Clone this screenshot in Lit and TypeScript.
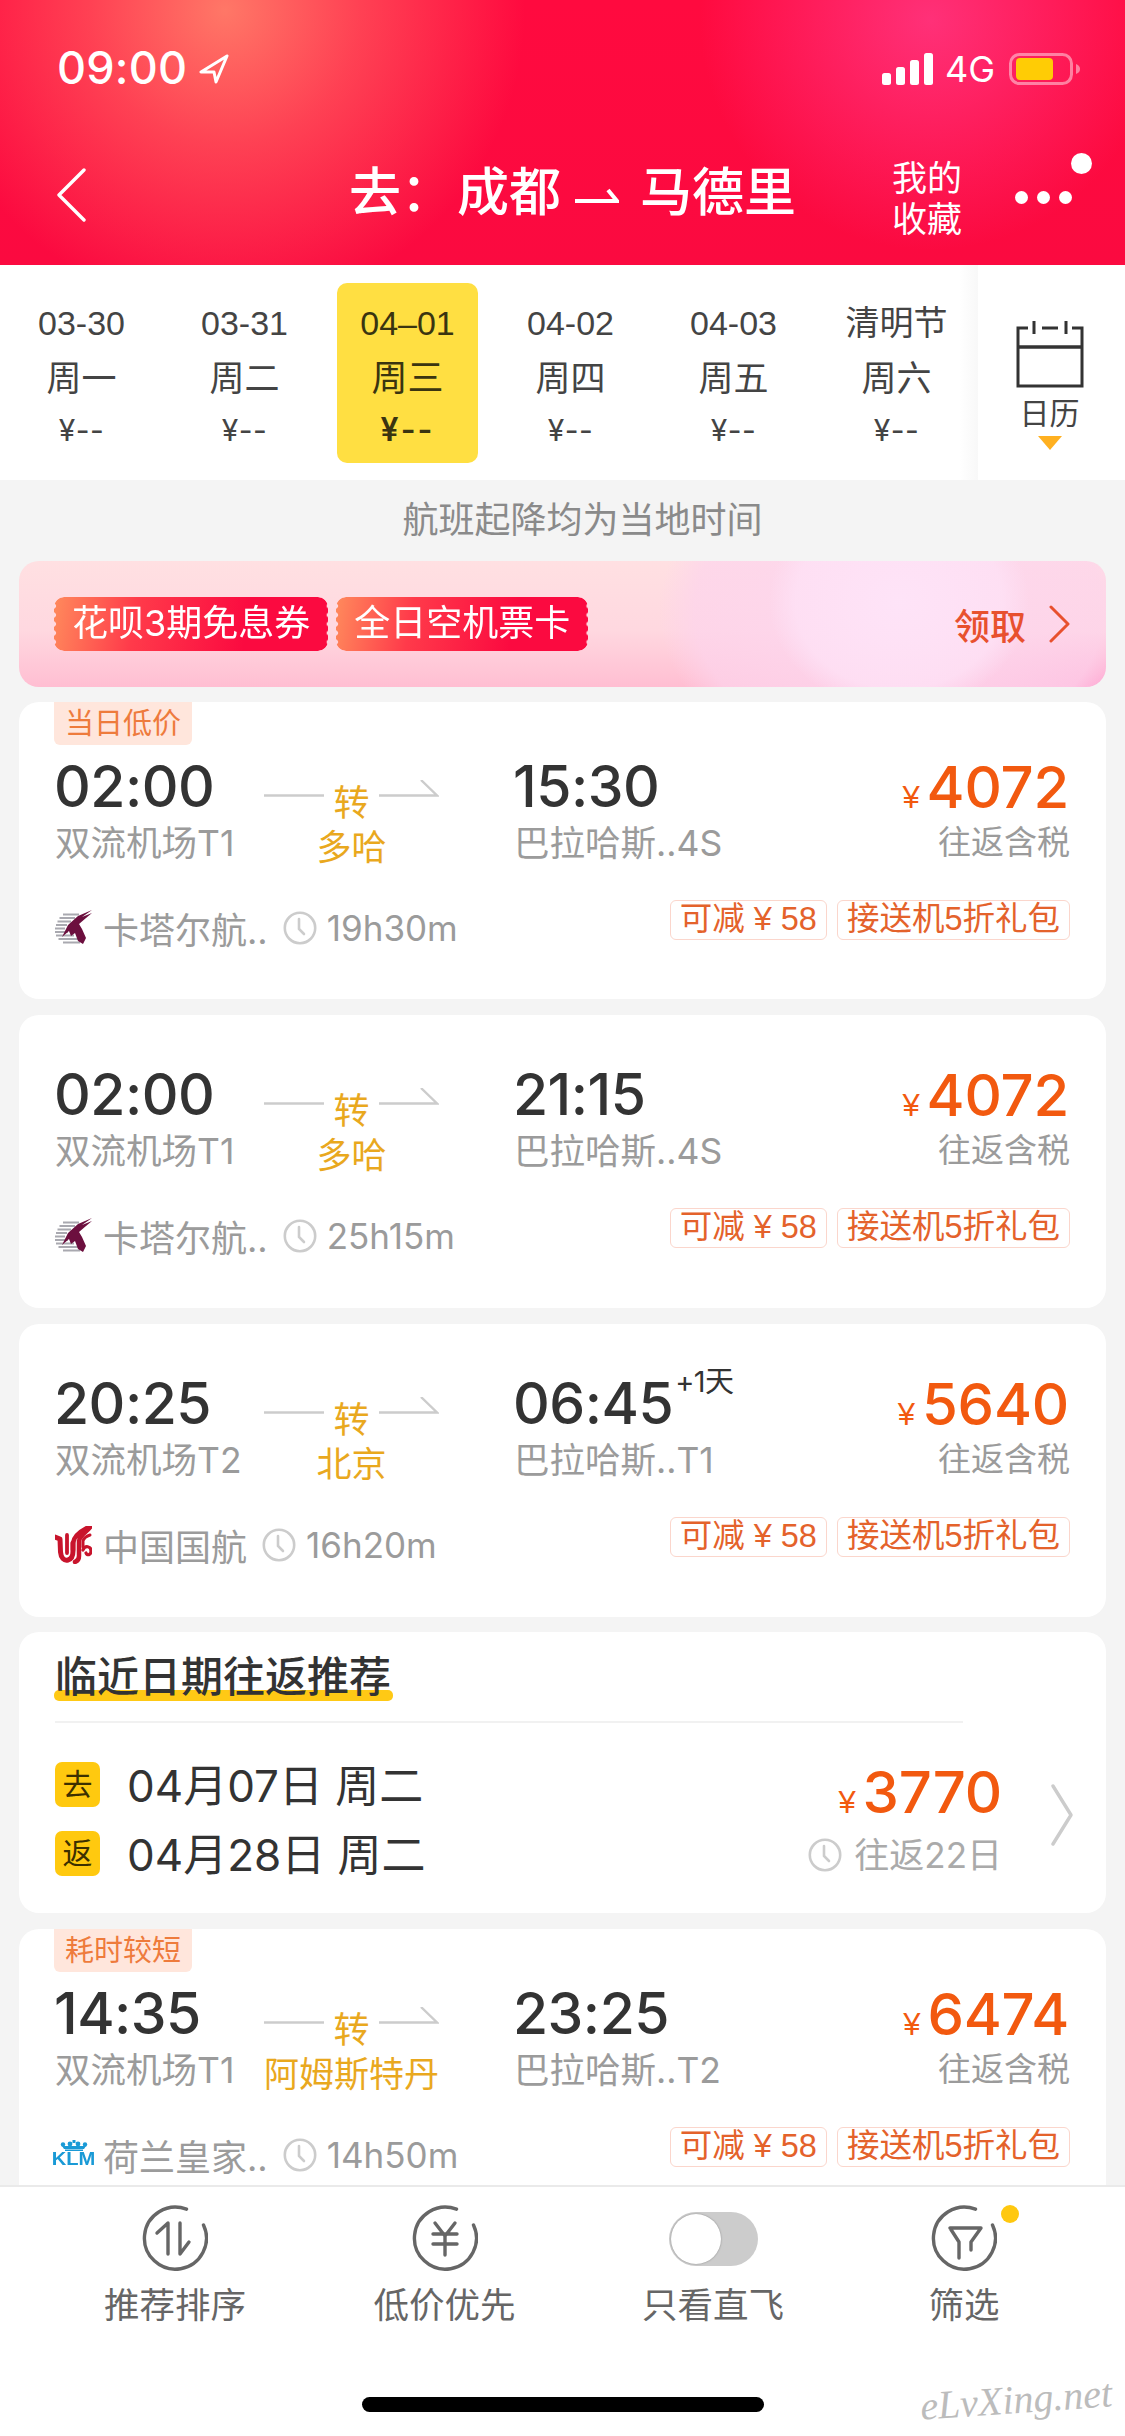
import { LitElement, html, css, svg } from "lit";
import { customElement } from "lit/decorators.js";

type Flight = {
  tag?: string; dep: string; depAp: string; via: string; arr: string; arrAp: string; plus?: string;
  price: string; logo: "qr" | "ca" | "kl"; airline: string; dur: string;
};

const FLIGHTS: Flight[] = [
  { tag: "当日低价", dep: "02:00", depAp: "双流机场T1", via: "多哈", arr: "15:30", arrAp: "巴拉哈斯..4S", price: "4072", logo: "qr", airline: "卡塔尔航..", dur: "19h30m" },
  { dep: "02:00", depAp: "双流机场T1", via: "多哈", arr: "21:15", arrAp: "巴拉哈斯..4S", price: "4072", logo: "qr", airline: "卡塔尔航..", dur: "25h15m" },
  { dep: "20:25", depAp: "双流机场T2", via: "北京", arr: "06:45", plus: "+1天", arrAp: "巴拉哈斯..T1", price: "5640", logo: "ca", airline: "中国国航", dur: "16h20m" },
  { tag: "耗时较短", dep: "14:35", depAp: "双流机场T1", via: "阿姆斯特丹", arr: "23:25", arrAp: "巴拉哈斯..T2", price: "6474", logo: "kl", airline: "荷兰皇家..", dur: "14h50m" },
];

const DATES = [
  { d: "03-30", w: "周一", p: "¥--" },
  { d: "03-31", w: "周二", p: "¥--" },
  { d: "04–01", w: "周三", p: "¥--", on: true },
  { d: "04-02", w: "周四", p: "¥--" },
  { d: "04-03", w: "周五", p: "¥--" },
  { d: "清明节", w: "周六", p: "¥--" },
];

const clock = (size: number) => html`<svg class="clock" width=${size} height=${size} viewBox="0 0 34 34" fill="none" stroke="#ccc" stroke-width="2.6" stroke-linecap="round"><circle cx="17" cy="17" r="15.2"/><path d="M16 8V18L21 23"/></svg>`;

const ring = svg`<path d="M61.5 20A31 31 0 1 1 44.5 4.2" fill="none" stroke="#666" stroke-width="3.4" stroke-linecap="round"/>`;

const LOGOS = {
  qr: html`<svg class="logo" width="37" height="36" viewBox="0 0 37 36">
    <g stroke="#a9a9b0" stroke-width="1.900">
      <path d="M8 4.500H24M4.500 8H20M2.500 11.500H16M1 15H12M0 18.500H10M0 22H13M1 25.500H19M3.500 29H24M8 32.500H25"/>
    </g>
    <path d="M37 0 23 6 13 15 7 27 14 21 16 26 20 23 23 31 28 34 31 28 27 19 24 14 31 8 37 3 27 7Z" fill="#6c0f3e"/>
  </svg>`,
  ca: html`<svg class="logo" width="37" height="38" viewBox="0 0 37 38" fill="none" stroke="#c8142c" stroke-linecap="round" stroke-linejoin="round">
    <path d="M0 11 5 13 5.500 26C6 32 9 35 13 34 17 33 18 30 18 25V17" stroke-width="5"/>
    <path d="M18 24V17C19 9 27 4 36 0 31 7 25 9 24 15V30C24 33 23 35 20 36" stroke-width="4.500"/>
    <path d="M28 21V15C29 11 32 10 35 9" stroke-width="3"/>
    <path d="M28 24C30 19 36 20 36 25 36 29 32 30 31 27" stroke-width="3.200"/>
    <path d="M12 9V27" stroke-width="3.800"/>
  </svg>`,
  kl: html`<div class="logo klm"><svg width="30" height="11" viewBox="0 0 30 11" fill="#1a9ad6"><rect x="13.500" y="0" width="3" height="3"/><circle cx="4" cy="4.500" r="2.200"/><circle cx="11" cy="4" r="2.400"/><circle cx="19" cy="4" r="2.400"/><circle cx="26" cy="4.500" r="2.200"/><path d="M3 6H27L25 9H5Z"/><rect x="6" y="9.500" width="18" height="1.500"/></svg><span>KLM</span></div>`,
};

@customElement("app-root")
export class AppRoot extends LitElement {
  static styles = css`
    :host { display: block; width: 1125px; font-family: "Inter", "Noto Sans CJK SC", "Liberation Sans", sans-serif; color: #333; }
    * { box-sizing: border-box; }
    .page { width: 1125px; height: 2436px; display: flex; flex-direction: column; background: #f4f4f4; overflow: hidden; }

    .header { flex: 0 0 265px; color: #fff; position: relative;
      background:
        radial-gradient(circle 300px at 225px 10px, rgba(255,125,105,.95), rgba(255,110,100,.55) 45%, rgba(255,60,80,0) 100%),
        radial-gradient(circle 230px at 930px 20px, rgba(255,55,130,.85), rgba(255,40,110,0) 100%),
        linear-gradient(180deg, #ff0a3f 0%, #fb0a40 100%); }
    .status { height: 119px; padding: 46px 0 0 57px; display: flex; align-items: flex-start; }
    .status-time { font-size: 45px; line-height: 44px; font-weight: 500; letter-spacing: .2px; }
    .loc { margin: 8px 0 0 12px; }
    .status-right { margin-left: auto; display: flex; align-items: flex-start; padding: 7px 0 0 0; margin-right: 44px; }
    .net { font-size: 36px; line-height: 36px; margin: -2px 14px 0 12px; color: #fff; }
    .nav { height: 146px; display: grid; grid-template-columns: 293px 542px 68px 1fr; padding-left: 57px; align-items: center; }
    .back { margin-top: 6px; }
    .title { display: flex; align-items: center; font-size: 52px; font-weight: 500; line-height: 60px; margin-top: 2px; white-space: nowrap; margin-left: -1px; }
    .title .colon { margin-right: 4px; }
    .title svg { margin: 6px 21px 0 14px; }
    .fav { font-size: 35px; line-height: 41px; text-align: center; margin-top: 14px; white-space: nowrap; }
    .more { display: flex; gap: 9px; margin: 10px 0 0 55px; }
    .more i { width: 13px; height: 13px; border-radius: 50%; background: #fff; display: block; }
    .pip { position: absolute; left: 1071px; top: 153px; width: 21px; height: 21px; border-radius: 50%; background: #fff; }

    .dates { flex: 0 0 215px; background: #fff; display: flex; }
    .date-list { display: grid; grid-template-columns: repeat(6, 163px); padding-top: 18px; background: linear-gradient(90deg, #fff calc(100% - 18px), #f8f8f8 100%); }
    .date { height: 180px; text-align: center; padding-top: 15px; color: #444; white-space: nowrap; border-radius: 10px; margin-inline: 11px; }
    .date .d { line-height: 50px; font-size: 34px; font-family: "Liberation Sans", "Noto Sans CJK SC", sans-serif; }
    .date .w { line-height: 60px; font-size: 35px; }
    .date .p { line-height: 44px; font-size: 30px; letter-spacing: .5px; }
    .date.on { background: #ffdf42; color: #3a3410; }
    .date.on .d { font-size: 34px; }
    .date.on .w { font-size: 36px; }
    .date.on .p { font-size: 32px; font-weight: 600; letter-spacing: 2px; }
    .cal { flex: 1; display: flex; flex-direction: column; align-items: center; padding: 55px 4px 0 0; color: #444; }
    .cal span { font-size: 30px; line-height: 44px; margin-top: 3px; }
    .tri { width: 0; height: 0; border-left: 12px solid transparent; border-right: 12px solid transparent; border-top: 14px solid #ffb020; margin-top: 1px; }

    .content { flex: 1; min-height: 0; overflow: hidden; padding: 0 19px; }
    .note { height: 81px; line-height: 81px; text-align: center; font-size: 36px; color: #8a8a8a; padding-left: 40px; white-space: nowrap; }
    .banner { height: 126px; border-radius: 20px; display: flex; align-items: center; padding: 0 36px 0 35px; margin-bottom: 15px;
      background:
        radial-gradient(ellipse 130px 110px at 880px 40px, rgba(254,228,248,.95), rgba(254,226,246,.75) 80%, rgba(254,220,240,0) 100%),
        radial-gradient(ellipse 240px 170px at 880px 50px, rgba(253,214,238,.9), rgba(253,212,236,.7) 85%, rgba(253,205,230,0) 100%),
        radial-gradient(ellipse 200px 60px at 1090px 130px, rgba(255,150,205,.8), rgba(255,170,215,0) 100%),
        linear-gradient(180deg, #ffe0e2 0%, #ffd8e0 55%, #ffbed2 100%); }
    .coupon { height: 54px; line-height: 52px; font-size: 36px; color: #fff; padding: 0 18px; white-space: nowrap; border-radius: 10px; margin-right: 8px;
      background: linear-gradient(100deg, #ff8a5c 0%, #ff3a4a 30%, #fb0a40 70%);
      -webkit-mask: radial-gradient(circle 2.500px at 0 50%, transparent 97%, #000) left / 51% 9px repeat-y, radial-gradient(circle 2.500px at 100% 50%, transparent 97%, #000) right / 51% 9px repeat-y;
      mask: radial-gradient(circle 2.500px at 0 50%, transparent 97%, #000) left / 51% 9px repeat-y, radial-gradient(circle 2.500px at 100% 50%, transparent 97%, #000) right / 51% 9px repeat-y; }
    .get { margin-left: auto; display: flex; align-items: center; gap: 22px; font-size: 36px; font-weight: 500; color: #e8502e; }

    .card { background: #fff; border-radius: 20px; margin-bottom: 16px; position: relative; padding: 50px 36px 52px; }
    .card.tagged { padding-top: 55px; padding-bottom: 51px; }
    .tag { position: absolute; left: 35px; top: 0; width: 138px; height: 43px; line-height: 43px; text-align: center; background: #ffe6dc; color: #ee7b3c; font-size: 29px; border-radius: 0 0 6px 6px; white-space: nowrap; }
    .main { display: grid; grid-template-columns: 209px 250px 1fr auto; grid-template-rows: 60px 52px; }
    .time { font-size: 57px; line-height: 60px; font-weight: 500; color: #333; white-space: nowrap; display: flex; align-items: flex-start; letter-spacing: -.5px; margin-left: -1px; }
    .time sup { font-size: 29px; line-height: 28px; font-weight: 400; margin: -6px 0 0 2px; }
    .ap { font-size: 35.500px; line-height: 52px; color: #9b9b9b; white-space: nowrap; margin-top: 1px; }
    .mid { grid-column: 2; grid-row: 1 / 3; width: 175px; display: flex; flex-direction: column; align-items: center; padding-top: 28px; }
    .mid-top { display: flex; align-items: flex-start; width: 175px; justify-content: space-between; height: 36px; }
    .mid-top b { font-weight: 400; font-size: 36px; line-height: 36px; color: #e9a81e; }
    .mid-top svg { margin-top: -5px; }
    .via { font-size: 35px; line-height: 52px; color: #e9a81e; white-space: nowrap; }
    .dep { grid-column: 1; grid-row: 1; } .dep-ap { grid-column: 1; grid-row: 2; }
    .arr { grid-column: 3; grid-row: 1; } .arr-ap { grid-column: 3; grid-row: 2; }
    .price { grid-column: 4; grid-row: 1; justify-self: end; margin-right: 1px; }
    .incl { grid-column: 4; grid-row: 2; justify-self: end; font-size: 33px; line-height: 50px; color: #9b9b9b; white-space: nowrap; }
    .pr { display: flex; align-items: baseline; gap: 7px; color: #f2590f; line-height: 60px; font-size: 58px; font-weight: 500; white-space: nowrap; letter-spacing: -.2px; }
    .pr i { font-style: normal; font-size: 31px; font-family: "Liberation Sans", sans-serif; font-weight: 400; }
    .foot { display: flex; margin-top: 31px; height: 48px; align-items: flex-start; }
    .air { display: flex; align-items: center; align-self: flex-end; height: 40px; font-size: 36px; color: #9b9b9b; white-space: nowrap; }
    .logo { margin-right: 11px; flex: none; }
    .klm { width: 37px; display: flex; flex-direction: column; align-items: center; margin-top: -4px; }
    .klm span { font: 700 19px/14px "Liberation Sans", sans-serif; color: #1a9ad6; transform: scaleX(1.06); margin-top: 1px; }
    .air .clock { margin: 0 10px 0 15px; }
    .dur { font-size: 35px; }
    .promos { margin-left: auto; display: flex; gap: 10px; }
    .promo { height: 40px; line-height: 36px; border: 1.500px solid #fbd6cc; border-radius: 6px; padding: 0 9px; font-size: 32.500px; font-family: "Liberation Sans", "Noto Sans CJK SC", sans-serif; color: #e4622b; white-space: nowrap; }

    .rec { background: #fff; border-radius: 20px; margin-bottom: 16px; padding: 20px 33px 25px 36px; margin-top: -1px; }
    .rec h2 { margin: 0; font-size: 42px; line-height: 50px; font-weight: 500; display: inline-block; position: relative; z-index: 0; color: #333; white-space: nowrap; }
    .rec h2::after { content: ""; position: absolute; z-index: -1; left: -1px; right: -2px; bottom: 1px; height: 11px; background: #ffc915; border-radius: 5px; }
    .rule { width: 908px; height: 2px; background: #f1f1f1; margin-top: 19px; }
    .rec-body { display: flex; padding-top: 27px; align-items: flex-start; }
    .legs { display: grid; }
    .leg { display: flex; align-items: center; height: 69px; gap: 27px; font-size: 44px; color: #333; white-space: nowrap; }
    .leg b { width: 45px; height: 45px; line-height: 44px; text-align: center; background: #ffc90f; color: #3c3000; border-radius: 7px; font-size: 30px; font-weight: 400; }
    .leg span { margin-bottom: 4px; }
    .rec-right { margin-left: auto; display: flex; flex-direction: column; align-items: flex-end; padding-top: 12px; }
    .rec-meta { display: flex; align-items: center; gap: 12px; font-size: 35px; line-height: 44px; color: #aaa; white-space: nowrap; }
    .rec-chev { margin: 34px 0 0 49px; }

    .tabs { flex: 0 0 251px; background: #fff; border-top: 2px solid #eaeaea; position: relative; }
    .tab-row { display: grid; grid-template-columns: 270px 269px 268px 234px; padding: 18px 0 0 40px; }
    .tab { display: flex; flex-direction: column; align-items: center; color: #666; font-size: 35.500px; position: relative; }
    .tab span { line-height: 50px; margin-top: 10px; white-space: nowrap; }
    .slot { height: 66px; display: flex; align-items: flex-end; }
    .toggle { width: 89px; height: 54px; border-radius: 27px; background: #ccc; padding: 2px; display: flex; margin-bottom: 5px; }
    .toggle i { width: 50px; height: 50px; border-radius: 50%; background: #fff; display: block; box-shadow: 0 0 2px rgba(0,0,0,.35); }
    .dot { position: absolute; left: 154px; top: 0; width: 18px; height: 18px; border-radius: 50%; background: #ffc80f; }
    .home { width: 402px; height: 15px; border-radius: 8px; background: #000; margin: 66px 0 0 362px; }
    .mark { position: absolute; left: 920px; top: 190px; font: italic 400 40px/46px "Liberation Serif", serif; color: #bcbcbc; white-space: nowrap; transform: rotate(-4deg); }
  `;

  private card(f: Flight) {
    return html`<div class="card ${f.tag ? "tagged" : ""}">
      ${f.tag ? html`<div class="tag">${f.tag}</div>` : ""}
      <div class="main">
        <div class="time dep">${f.dep}</div>
        <div class="ap dep-ap">${f.depAp}</div>
        <div class="mid">
          <div class="mid-top">
            <svg width="60" height="20" viewBox="0 0 60 20"><path d="M0 15.500H60" stroke="#ccc" stroke-width="2.400"/></svg>
            <b>转</b>
            <svg width="60" height="20" viewBox="0 0 60 20" fill="none"><path d="M0 15.500H58L42 0" stroke="#ccc" stroke-width="2.400"/></svg>
          </div>
          <div class="via">${f.via}</div>
        </div>
        <div class="time arr">${f.arr}${f.plus ? html`<sup>${f.plus}</sup>` : ""}</div>
        <div class="ap arr-ap">${f.arrAp}</div>
        <div class="pr price"><i>¥</i>${f.price}</div>
        <div class="incl">往返含税</div>
      </div>
      <div class="foot">
        <div class="air">${LOGOS[f.logo]}${f.airline}${clock(34)}<span class="dur">${f.dur}</span></div>
        <div class="promos"><div class="promo">可减 ¥ 58</div><div class="promo">接送机5折礼包</div></div>
      </div>
    </div>`;
  }

  render() {
    return html`<div class="page">
      <header class="header">
        <div class="status">
          <div class="status-time">09:00</div>
          <svg class="loc" width="30" height="30" viewBox="0 0 30 30" fill="none" stroke="#fff" stroke-width="3" stroke-linejoin="round"><path d="M28 2 2 18H15L17 28Z"/></svg>
          <div class="status-right">
            <svg width="51" height="32" viewBox="0 0 51 32" fill="#fff"><rect x="0" y="20" width="9" height="12" rx="2.500"/><rect x="14" y="14" width="9" height="18" rx="2.500"/><rect x="28" y="7" width="9" height="25" rx="2.500"/><rect x="42" y="0" width="9" height="32" rx="2.500"/></svg>
            <div class="net">4G</div>
            <svg width="72" height="32" viewBox="0 0 72 32"><rect x="1.500" y="1.500" width="61" height="29" rx="9" fill="none" stroke="#fff" stroke-opacity=".45" stroke-width="3"/><rect x="7" y="5" width="37" height="22" rx="4" fill="#ffcc05"/><path d="M67 11C70 12 71 14 71 16S70 20 67 21Z" fill="#fff" fill-opacity=".45"/></svg>
          </div>
        </div>
        <div class="nav">
          <svg class="back" width="30" height="54" viewBox="0 0 30 54" fill="none" stroke="#fff" stroke-width="3.400" stroke-linecap="round" stroke-linejoin="round"><path d="M27 2 2 27 27 52"/></svg>
          <div class="title"><span class="colon">去：</span><span>成都</span>
            <svg width="44" height="16" viewBox="0 0 44 16" fill="none" stroke="#fff" stroke-width="4"><path d="M0 13H42L33 2"/></svg>
            <span>马德里</span></div>
          <div class="fav">我的<br />收藏</div>
          <div class="more"><i></i><i></i><i></i></div>
        </div>
        <div class="pip"></div>
      </header>

      <section class="dates">
        <div class="date-list">
          ${DATES.map((x) => html`<div class="date ${x.on ? "on" : ""}"><div class="d">${x.d}</div><div class="w">${x.w}</div><div class="p">${x.p}</div></div>`)}
        </div>
        <div class="cal">
          <svg width="68" height="68" viewBox="0 0 68 68" fill="none" stroke="#333" stroke-width="3"><path d="M2 26V8H12M56 8H66V26"/><path d="M18 1V14M50 1V14M26 8H42"/><path d="M2 26V66H66V26" /><path d="M2 27H66" stroke-width="3.500"/></svg>
          <span>日历</span>
          <div class="tri"></div>
        </div>
      </section>

      <main class="content">
        <div class="note">航班起降均为当地时间</div>
        <div class="banner">
          <div class="coupon">花呗3期免息券</div>
          <div class="coupon">全日空机票卡</div>
          <div class="get">领取
            <svg width="22" height="38" viewBox="0 0 22 38" fill="none" stroke="#e8502e" stroke-width="3" stroke-linecap="round" stroke-linejoin="round"><path d="M3 2 20 19 3 36"/></svg>
          </div>
        </div>
        ${this.card(FLIGHTS[0])}
        ${this.card(FLIGHTS[1])}
        ${this.card(FLIGHTS[2])}
        <div class="rec">
          <h2>临近日期往返推荐</h2>
          <div class="rule"></div>
          <div class="rec-body">
            <div class="legs">
              <div class="leg"><b>去</b><span>04月07日 周二</span></div>
              <div class="leg"><b>返</b><span>04月28日 周二</span></div>
            </div>
            <div class="rec-right">
              <div class="pr"><i>¥</i>3770</div>
              <div class="rec-meta">${clock(34)}往返22日</div>
            </div>
            <svg class="rec-chev" width="22" height="62" viewBox="0 0 22 62" fill="none" stroke="#ccc" stroke-width="3.400" stroke-linecap="round" stroke-linejoin="round"><path d="M2 2 20 31 2 60"/></svg>
          </div>
        </div>
        ${this.card(FLIGHTS[3])}
      </main>

      <footer class="tabs">
        <div class="tab-row">
          <div class="tab"><div class="slot"><svg width="66" height="66" viewBox="0 0 66 66" fill="none" stroke="#666" stroke-width="3.400" stroke-linecap="round" stroke-linejoin="round">${ring}<path d="M26 49V18L15 28M38 18V49L47 37"/></svg></div><span>推荐排序</span></div>
          <div class="tab"><div class="slot"><svg width="66" height="66" viewBox="0 0 66 66" fill="none" stroke="#666" stroke-width="3.400" stroke-linecap="round" stroke-linejoin="round">${ring}<path d="M23 18 33 31 43 18M33 31V50M21 29H45M21 39H45"/></svg></div><span>低价优先</span></div>
          <div class="tab"><div class="slot"><div class="toggle"><i></i></div></div><span>只看直飞</span></div>
          <div class="tab"><div class="slot"><svg width="66" height="66" viewBox="0 0 66 66" fill="none" stroke="#666" stroke-width="3.400" stroke-linecap="round" stroke-linejoin="round">${ring}<path d="M19 23H50L40 37V45M19 23 28 37V53"/></svg></div><span>筛选</span><i class="dot"></i></div>
        </div>
        <div class="home"></div>
        <div class="mark">eLvXing.net</div>
      </footer>
    </div>`;
  }
}
